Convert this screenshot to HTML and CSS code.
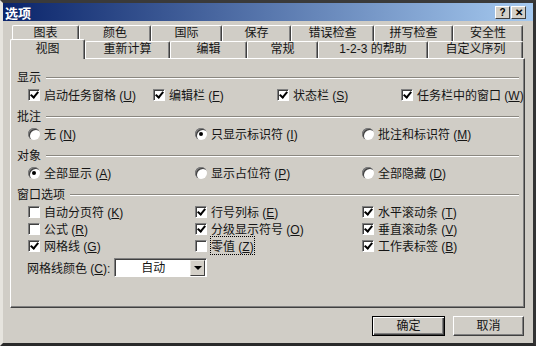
FILE: index.html
```html
<!DOCTYPE html>
<html lang="zh-CN">
<head>
    <meta charset="UTF-8">
    <title>选项</title>
    <link rel="stylesheet" href="styles.css">
</head>
<body>
    <div class="window">
        <!-- 标题栏 -->
        <div class="titlebar">
            <span class="title">选项</span>
            <div class="tbtns">
                <span class="tbtn">?</span>
                <span class="tbtn">✕</span>
            </div>
        </div>

        <div class="content">
            <!-- 选项卡 -->
            <div class="tabrow back">
                <div class="tab">图表</div>
                <div class="tab">颜色</div>
                <div class="tab">国际</div>
                <div class="tab">保存</div>
                <div class="tab">错误检查</div>
                <div class="tab">拼写检查</div>
                <div class="tab">安全性</div>
            </div>
            <div class="tabrow front">
                <div class="tab active">视图</div>
                <div class="tab">重新计算</div>
                <div class="tab">编辑</div>
                <div class="tab">常规</div>
                <div class="tab">1-2-3 的帮助</div>
                <div class="tab">自定义序列</div>
            </div>

            <div class="panel">
                <div class="sec-head">显示</div>
                <div class="opts four">
                    <div class="opt"><span class="cb on"></span><span>启动任务窗格 (<u>U</u>)</span></div>
                    <div class="opt"><span class="cb on"></span><span>编辑栏 (<u>F</u>)</span></div>
                    <div class="opt"><span class="cb on"></span><span>状态栏 (<u>S</u>)</span></div>
                    <div class="opt"><span class="cb on"></span><span>任务栏中的窗口 (<u>W</u>)</span></div>
                </div>

                <div class="sec-head">批注</div>
                <div class="opts">
                    <div class="opt"><span class="rb"></span><span>无 (<u>N</u>)</span></div>
                    <div class="opt"><span class="rb on"></span><span>只显示标识符 (<u>I</u>)</span></div>
                    <div class="opt"><span class="rb"></span><span>批注和标识符 (<u>M</u>)</span></div>
                </div>

                <div class="sec-head">对象</div>
                <div class="opts">
                    <div class="opt"><span class="rb on"></span><span>全部显示 (<u>A</u>)</span></div>
                    <div class="opt"><span class="rb"></span><span>显示占位符 (<u>P</u>)</span></div>
                    <div class="opt"><span class="rb"></span><span>全部隐藏 (<u>D</u>)</span></div>
                </div>

                <div class="sec-head">窗口选项</div>
                <div class="opts">
                    <div class="opt"><span class="cb"></span><span>自动分页符 (<u>K</u>)</span></div>
                    <div class="opt"><span class="cb on"></span><span>行号列标 (<u>E</u>)</span></div>
                    <div class="opt"><span class="cb on"></span><span>水平滚动条 (<u>T</u>)</span></div>
                    <div class="opt"><span class="cb"></span><span>公式 (<u>R</u>)</span></div>
                    <div class="opt"><span class="cb on"></span><span>分级显示符号 (<u>O</u>)</span></div>
                    <div class="opt"><span class="cb on"></span><span>垂直滚动条 (<u>V</u>)</span></div>
                    <div class="opt"><span class="cb on"></span><span>网格线 (<u>G</u>)</span></div>
                    <div class="opt"><span class="cb"></span><span class="focus">零值 (<u>Z</u>)</span></div>
                    <div class="opt"><span class="cb on"></span><span>工作表标签 (<u>B</u>)</span></div>
                </div>

                <div class="gridcolor">
                    <span class="gc-label">网格线颜色 (<u>C</u>):</span>
                    <div class="select">
                        <span class="val">自动</span>
                        <span class="arrow"></span>
                    </div>
                </div>
            </div>

            <div class="buttons">
                <div class="btn default">确定</div>
                <div class="btn">取消</div>
            </div>
        </div>
    </div>
</body>
</html>
```

FILE: styles.css
```css
body {
    margin: 0;
    font-family: "Liberation Sans", "Noto Sans CJK SC", sans-serif;
    font-size: 12px;
    color: #151515;
    background-color: #d0cdc6;
}

.window {
    width: 536px;
    height: 346px;
    box-sizing: border-box;
    border-style: solid;
    border-width: 3px;
    border-color: #3a3a3a #333 #2a2a2a #e6e4de;
    background-color: #d0cdc6;
    overflow: hidden;
}

.titlebar {
    height: 18px;
    background: linear-gradient(to right, #0a246a, #a6caf0);
    display: flex;
    align-items: center;
    justify-content: space-between;
    padding: 0 7px 0 2px;
}

.title {
    color: white;
    font-weight: bold;
    font-size: 13px;
}

.tbtns {
    display: flex;
    gap: 1px;
}

.tbtn {
    width: 15px;
    height: 13px;
    box-sizing: border-box;
    background-color: #d4d0c8;
    border: 1px solid;
    border-color: #fff #404040 #404040 #fff;
    font: bold 10px "Liberation Sans", sans-serif;
    color: #000;
    display: flex;
    align-items: center;
    justify-content: center;
}

.content {
    padding: 4px 0 0 7px;
}

/* 选项卡 */
.tabrow {
    display: flex;
    height: 16px;
}

.tabrow.back {
    margin-left: 2px;
}

.tabrow.front {
    height: 17px;
    position: relative;
    z-index: 1;
}

.tab {
    box-sizing: border-box;
    height: 100%;
    border-top: 1px solid #fff;
    border-left: 1px solid #fff;
    border-right: 1px solid #404040;
    box-shadow: inset -1px 0 #808080;
    border-radius: 2px 2px 0 0;
    text-align: center;
    line-height: 14px;
    white-space: nowrap;
}

.back .tab:nth-child(1) { width: 67px; }
.back .tab:nth-child(2) { width: 72px; }
.back .tab:nth-child(3) { width: 71px; }
.back .tab:nth-child(4) { width: 69px; }
.back .tab:nth-child(5) { width: 83px; }
.back .tab:nth-child(6) { width: 79px; }
.back .tab:nth-child(7) { width: 70px; }

.front .tab:nth-child(1) { width: 75px; }
.front .tab:nth-child(2) { width: 85px; }
.front .tab:nth-child(3) { width: 77px; }
.front .tab:nth-child(4) { width: 71px; }
.front .tab:nth-child(5) { width: 110px; }
.front .tab:nth-child(6) { width: 95px; }

.tab.active {
    height: 20px;
    margin-top: -2px;
    padding-top: 2px;
    background-color: #d0cdc6;
}

/* 面板 */
.panel {
    width: 515px;
    height: 250px;
    box-sizing: border-box;
    border: 1px solid;
    border-color: #fff #404040 #404040 #fff;
    box-shadow: inset -1px -1px #808080;
    padding: 8px 5px 0 6px;
}

.sec-head {
    display: flex;
    align-items: center;
    height: 19px;
}

.sec-head::after {
    content: "";
    flex: 1;
    border-top: 1px solid #8a8780;
    border-bottom: 1px solid #fff;
    margin: 2px 0 0 5px;
}

.opts {
    display: grid;
    grid-template-columns: 167px 167px 1fr;
    grid-auto-rows: 17px;
    padding-left: 11px;
    margin-bottom: 3px;
}

.opts.four {
    grid-template-columns: 125px 124px 124px 1fr;
}

.opt {
    display: flex;
    align-items: center;
    gap: 4px;
    white-space: nowrap;
}

.cb {
    position: relative;
    flex: none;
    width: 12px;
    height: 12px;
    box-sizing: border-box;
    background-color: #fff;
    border: 1px solid;
    border-color: #808080 #fff #fff #808080;
    box-shadow: inset 1px 1px #404040;
}

.cb.on::after {
    content: "";
    position: absolute;
    left: 3px;
    top: 0;
    width: 3px;
    height: 6px;
    border: solid #000;
    border-width: 0 2px 2px 0;
    transform: rotate(40deg);
}

.rb {
    flex: none;
    width: 12px;
    height: 12px;
    border-radius: 50%;
    background-color: #fff;
    box-shadow: inset 1px 1px #808080, inset 2px 2px #404040;
    display: flex;
    align-items: center;
    justify-content: center;
}

.rb.on::after {
    content: "";
    width: 4px;
    height: 4px;
    border-radius: 50%;
    background-color: #000;
}

.focus {
    outline: 1px dotted #000;
    outline-offset: 0;
}

.gridcolor {
    display: flex;
    align-items: center;
    gap: 4px;
    padding-left: 10px;
    margin-top: 4px;
}

.gc-label {
    white-space: nowrap;
}

.select {
    width: 93px;
    height: 19px;
    box-sizing: border-box;
    background-color: #fff;
    border: 1px solid;
    border-color: #808080 #fff #fff #808080;
    box-shadow: inset 1px 1px #404040;
    display: flex;
    padding: 1px 1px 0 1px;
}

.select .val {
    flex: 1;
    text-align: center;
    line-height: 16px;
}

.select .arrow {
    width: 15px;
    box-sizing: border-box;
    background-color: #d4d0c8;
    border: 1px solid;
    border-color: #e8e6e0 #404040 #404040 #e8e6e0;
    display: flex;
    align-items: center;
    justify-content: center;
}

.select .arrow::after {
    content: "";
    border-left: 4px solid transparent;
    border-right: 4px solid transparent;
    border-top: 4px solid #000;
}

/* 按钮 */
.buttons {
    display: flex;
    justify-content: flex-end;
    gap: 8px;
    width: 514px;
    margin-top: 8px;
}

.btn {
    width: 71px;
    height: 20px;
    box-sizing: border-box;
    border: 1px solid;
    border-color: #fff #404040 #404040 #fff;
    box-shadow: inset -1px -1px #808080;
    text-align: center;
    line-height: 18px;
}

.btn.default {
    width: 73px;
    border-color: #000;
    box-shadow: inset 1px 1px #fff, inset -1px -1px #404040, inset -2px -2px #808080;
}
```
